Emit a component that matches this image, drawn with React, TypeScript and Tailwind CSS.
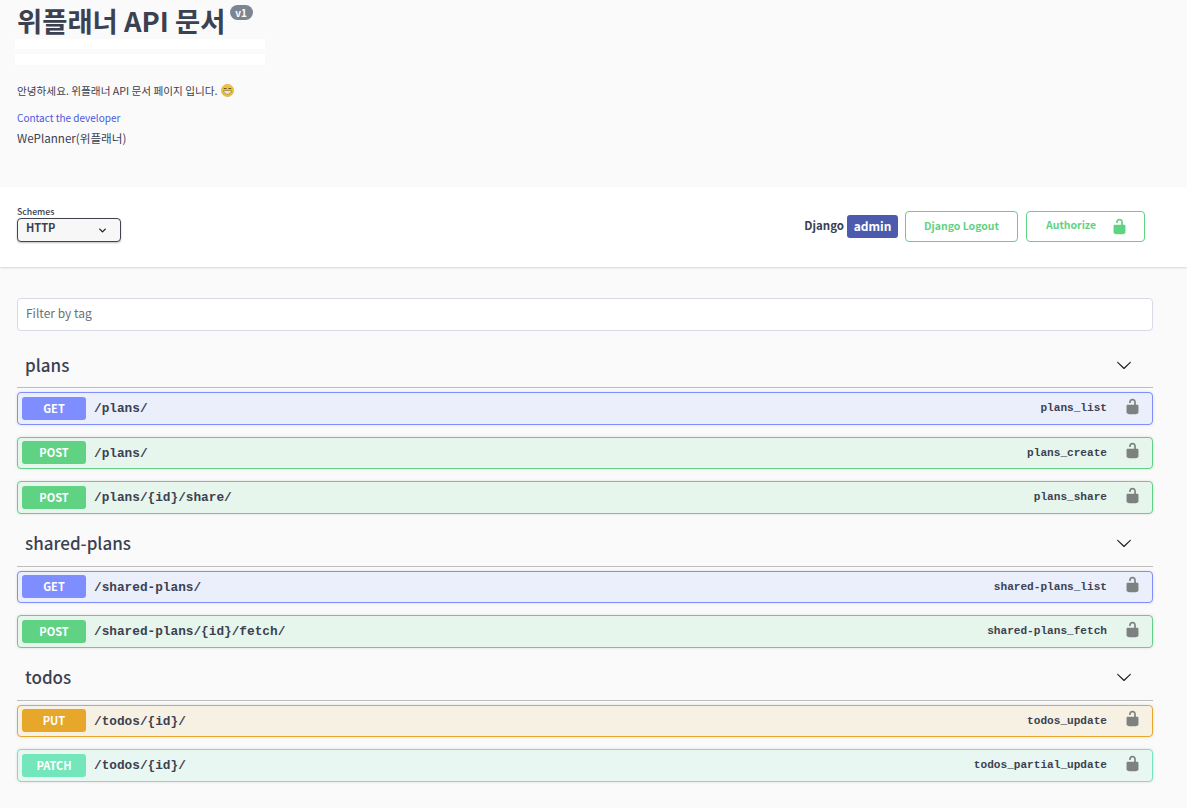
import { ChevronDown } from 'lucide-react';

const sans = 'font-["Noto_Sans_CJK_KR","Noto_Sans",sans-serif]';

type Method = 'GET' | 'POST' | 'PUT' | 'PATCH';

const methodStyles: Record<Method, { row: string; badge: string }> = {
  GET: { row: 'border-[#7f8eff] bg-[#ebeefb]', badge: 'bg-[#7f8eff]' },
  POST: { row: 'border-[#5fd283] bg-[#e7f6ec]', badge: 'bg-[#5fd283]' },
  PUT: { row: 'border-[#e9a827] bg-[#f7f1e3]', badge: 'bg-[#e6a72a]' },
  PATCH: { row: 'border-[#73e6bb] bg-[#e8f7f2]', badge: 'bg-[#73e6bb]' },
};

const groups: { tag: string; ops: { method: Method; path: string; id: string }[] }[] = [
  {
    tag: 'plans',
    ops: [
      { method: 'GET', path: '/plans/', id: 'plans_list' },
      { method: 'POST', path: '/plans/', id: 'plans_create' },
      { method: 'POST', path: '/plans/{id}/share/', id: 'plans_share' },
    ],
  },
  {
    tag: 'shared-plans',
    ops: [
      { method: 'GET', path: '/shared-plans/', id: 'shared-plans_list' },
      { method: 'POST', path: '/shared-plans/{id}/fetch/', id: 'shared-plans_fetch' },
    ],
  },
  {
    tag: 'todos',
    ops: [
      { method: 'PUT', path: '/todos/{id}/', id: 'todos_update' },
      { method: 'PATCH', path: '/todos/{id}/', id: 'todos_partial_update' },
    ],
  },
];

// the open padlock from swagger-ui
function Unlocked({ className }: { className: string }) {
  return (
    <svg viewBox="0 0 20 20" className={className} fill="currentColor">
      <path d="M15.8 8H14V5.6C14 2.703 12.665 1 10 1 7.334 1 6 2.703 6 5.6V6h2v-.801C8 3.754 8.797 3 10 3c1.203 0 2 .754 2 2.199V8H4c-.553 0-1 .646-1 1.199V17c0 .549.428 1.139.951 1.307l1.197.387C5.672 18.861 6.55 19 7.1 19h5.8c.549 0 1.428-.139 1.951-.307l1.196-.387c.524-.167.953-.757.953-1.306V9.199C17 8.646 16.352 8 15.8 8z" />
    </svg>
  );
}

function Arrow() {
  return (
    <svg viewBox="0 0 20 20" className="h-[16px] w-[16px] text-[#222]" fill="currentColor">
      <path d="M17.418 6.109c.272-.268.709-.268.979 0s.271.701 0 .969l-7.908 7.83c-.27.268-.707.268-.979 0l-7.908-7.83c-.27-.268-.27-.701 0-.969.271-.268.709-.268.979 0L10 13.25l7.418-7.141z" />
    </svg>
  );
}

function Grin() {
  return (
    <svg viewBox="0 0 14 14" className="ml-[3px] inline-block h-[13px] w-[13px] align-[-2px]">
      <circle cx="7" cy="7" r="6.6" fill="#f0c43a" stroke="#c9962a" strokeWidth="0.5" />
      <path d="M3.4 4.9h2.2M8.4 4.9h2.2" stroke="#5b4a1e" strokeWidth="1" strokeLinecap="round" />
      <path d="M2.8 7.2h8.4c0 2.4-1.9 3.8-4.2 3.8S2.8 9.6 2.8 7.2z" fill="#fff" stroke="#6b5320" strokeWidth="0.6" />
      <path d="M3.2 8.9h7.6" stroke="#9a8a66" strokeWidth="0.4" />
    </svg>
  );
}

function OpRow({ method, path, id }: { method: Method; path: string; id: string }) {
  const s = methodStyles[method];
  return (
    <div className={`mb-[12px] flex h-[32.5px] items-center rounded-[4px] border pl-[4px] pr-[11.5px] shadow-[0_0_3px_rgba(0,0,0,0.12)] ${s.row}`}>
      <div className={`flex h-[23px] w-[64px] items-center justify-center rounded-[3px] pb-[1px] text-[11px] font-bold text-white ${s.badge}`}>
        {method}
      </div>
      <div className='ml-[8px] flex-1 pt-[1px] font-["Liberation_Mono",monospace] text-[12.75px] font-bold text-[#3b4151]'>{path}</div>
      <div className='pt-[1px] font-["Liberation_Mono",monospace] text-[11.1px] font-bold text-[#3b4151]'>{id}</div>
      <Unlocked className="mb-[4px] ml-[16.5px] h-[17px] w-[17px] text-[#7d8280]" />
    </div>
  );
}

export default function App() {
  return (
    <div className={`h-[808px] overflow-hidden bg-[#fafafa] text-[#3b4151] ${sans}`}>
      {/* Info */}
      <div className="h-[187px] pl-[17px]">
        <div className="flex items-start">
          <h1 className="text-[27.4px] font-bold leading-[40px] text-[#3b4151]">위플래너 API 문서</h1>
          <span className="ml-[4px] mt-[5px] flex h-[15px] w-[23px] items-center justify-center rounded-full bg-[#7d8492] pb-[1px] text-[10px] font-bold text-white">v1</span>
        </div>
        <div className="-ml-[2px] -mt-[1px] h-[10px] w-[250px] bg-white" />
        <div className="-ml-[2px] mt-[5px] h-[11px] w-[250px] bg-white" />
        <p className="mt-[17px] text-[10.65px] leading-[18px]">
          안녕하세요. 위플래너 API 문서 페이지 입니다.
          <Grin />
        </p>
        <div className="mt-[9px] text-[10px] leading-[18px] text-[#4b57e0]">Contact the developer</div>
        <div className="mt-[2px] text-[11.6px] leading-[18px] text-[#3b4151]">WePlanner(위플래너)</div>
      </div>

      {/* Schemes */}
      <div className="flex h-[80px] justify-between bg-white pl-[17px] pr-[42px] shadow-[0_1px_2px_rgba(0,0,0,0.15)]">
        <div className="pt-[19px]">
          <div className="text-[8.7px] font-medium leading-[12px]">Schemes</div>
          <div className="flex h-[24px] w-[104px] items-center justify-between rounded-[4px] border border-[#41444e] bg-[#f7f7f7] pb-[5px] pl-[8px] pr-[12px] text-[11px] font-bold shadow-[0_1px_2px_rgba(0,0,0,0.25)]">
            HTTP
            <ChevronDown className="mt-[5px] h-[11px] w-[11px] text-[#222]" strokeWidth={3} />
          </div>
        </div>
        <div className="flex items-start pt-[24px]">
          <span className="mt-[5px] text-[11.5px] font-semibold leading-[18px]">Django</span>
          <span className="ml-[3px] mt-[4px] flex h-[23px] w-[51px] items-center justify-center rounded-[3px] bg-[#4c5bad] pb-[1px] text-[12px] font-semibold text-white">admin</span>
          <div className="ml-[7px] flex h-[31px] w-[113px] items-center justify-center rounded-[4px] border border-[#5fd283] pb-[2px] text-[10.5px] font-bold text-[#5fd283]">Django Logout</div>
          <div className="ml-[8px] flex h-[31px] w-[119px] items-center rounded-[4px] border border-[#5fd283] pl-[19px] text-[10.5px] font-bold text-[#5fd283]">
            <span className="mb-[3px]">Authorize</span>
            <Unlocked className="ml-[15px] h-[17px] w-[17px]" />
          </div>
        </div>
      </div>

      {/* Operations */}
      <div className="pl-[17px] pr-[34px] pt-[31px]">
        <div className="mb-[16px] flex h-[33px] items-center rounded-[4px] border border-[#d8dae8] bg-white pb-[3px] pl-[8px] text-[12px] text-[#6b6f78]">
          Filter by tag
        </div>
        {groups.map((g) => (
          <div key={g.tag}>
            <div className="mb-[4px] flex h-[41px] items-center justify-between border-b border-[#bdbdbe] pb-[5px] pl-[8px] pr-[21px]">
              <span className="text-[17px] font-medium leading-[24px] text-[#3b4151]">{g.tag}</span>
              <Arrow />
            </div>
            {g.ops.map((op) => (
              <OpRow key={op.id} {...op} />
            ))}
          </div>
        ))}
      </div>
    </div>
  );
}
